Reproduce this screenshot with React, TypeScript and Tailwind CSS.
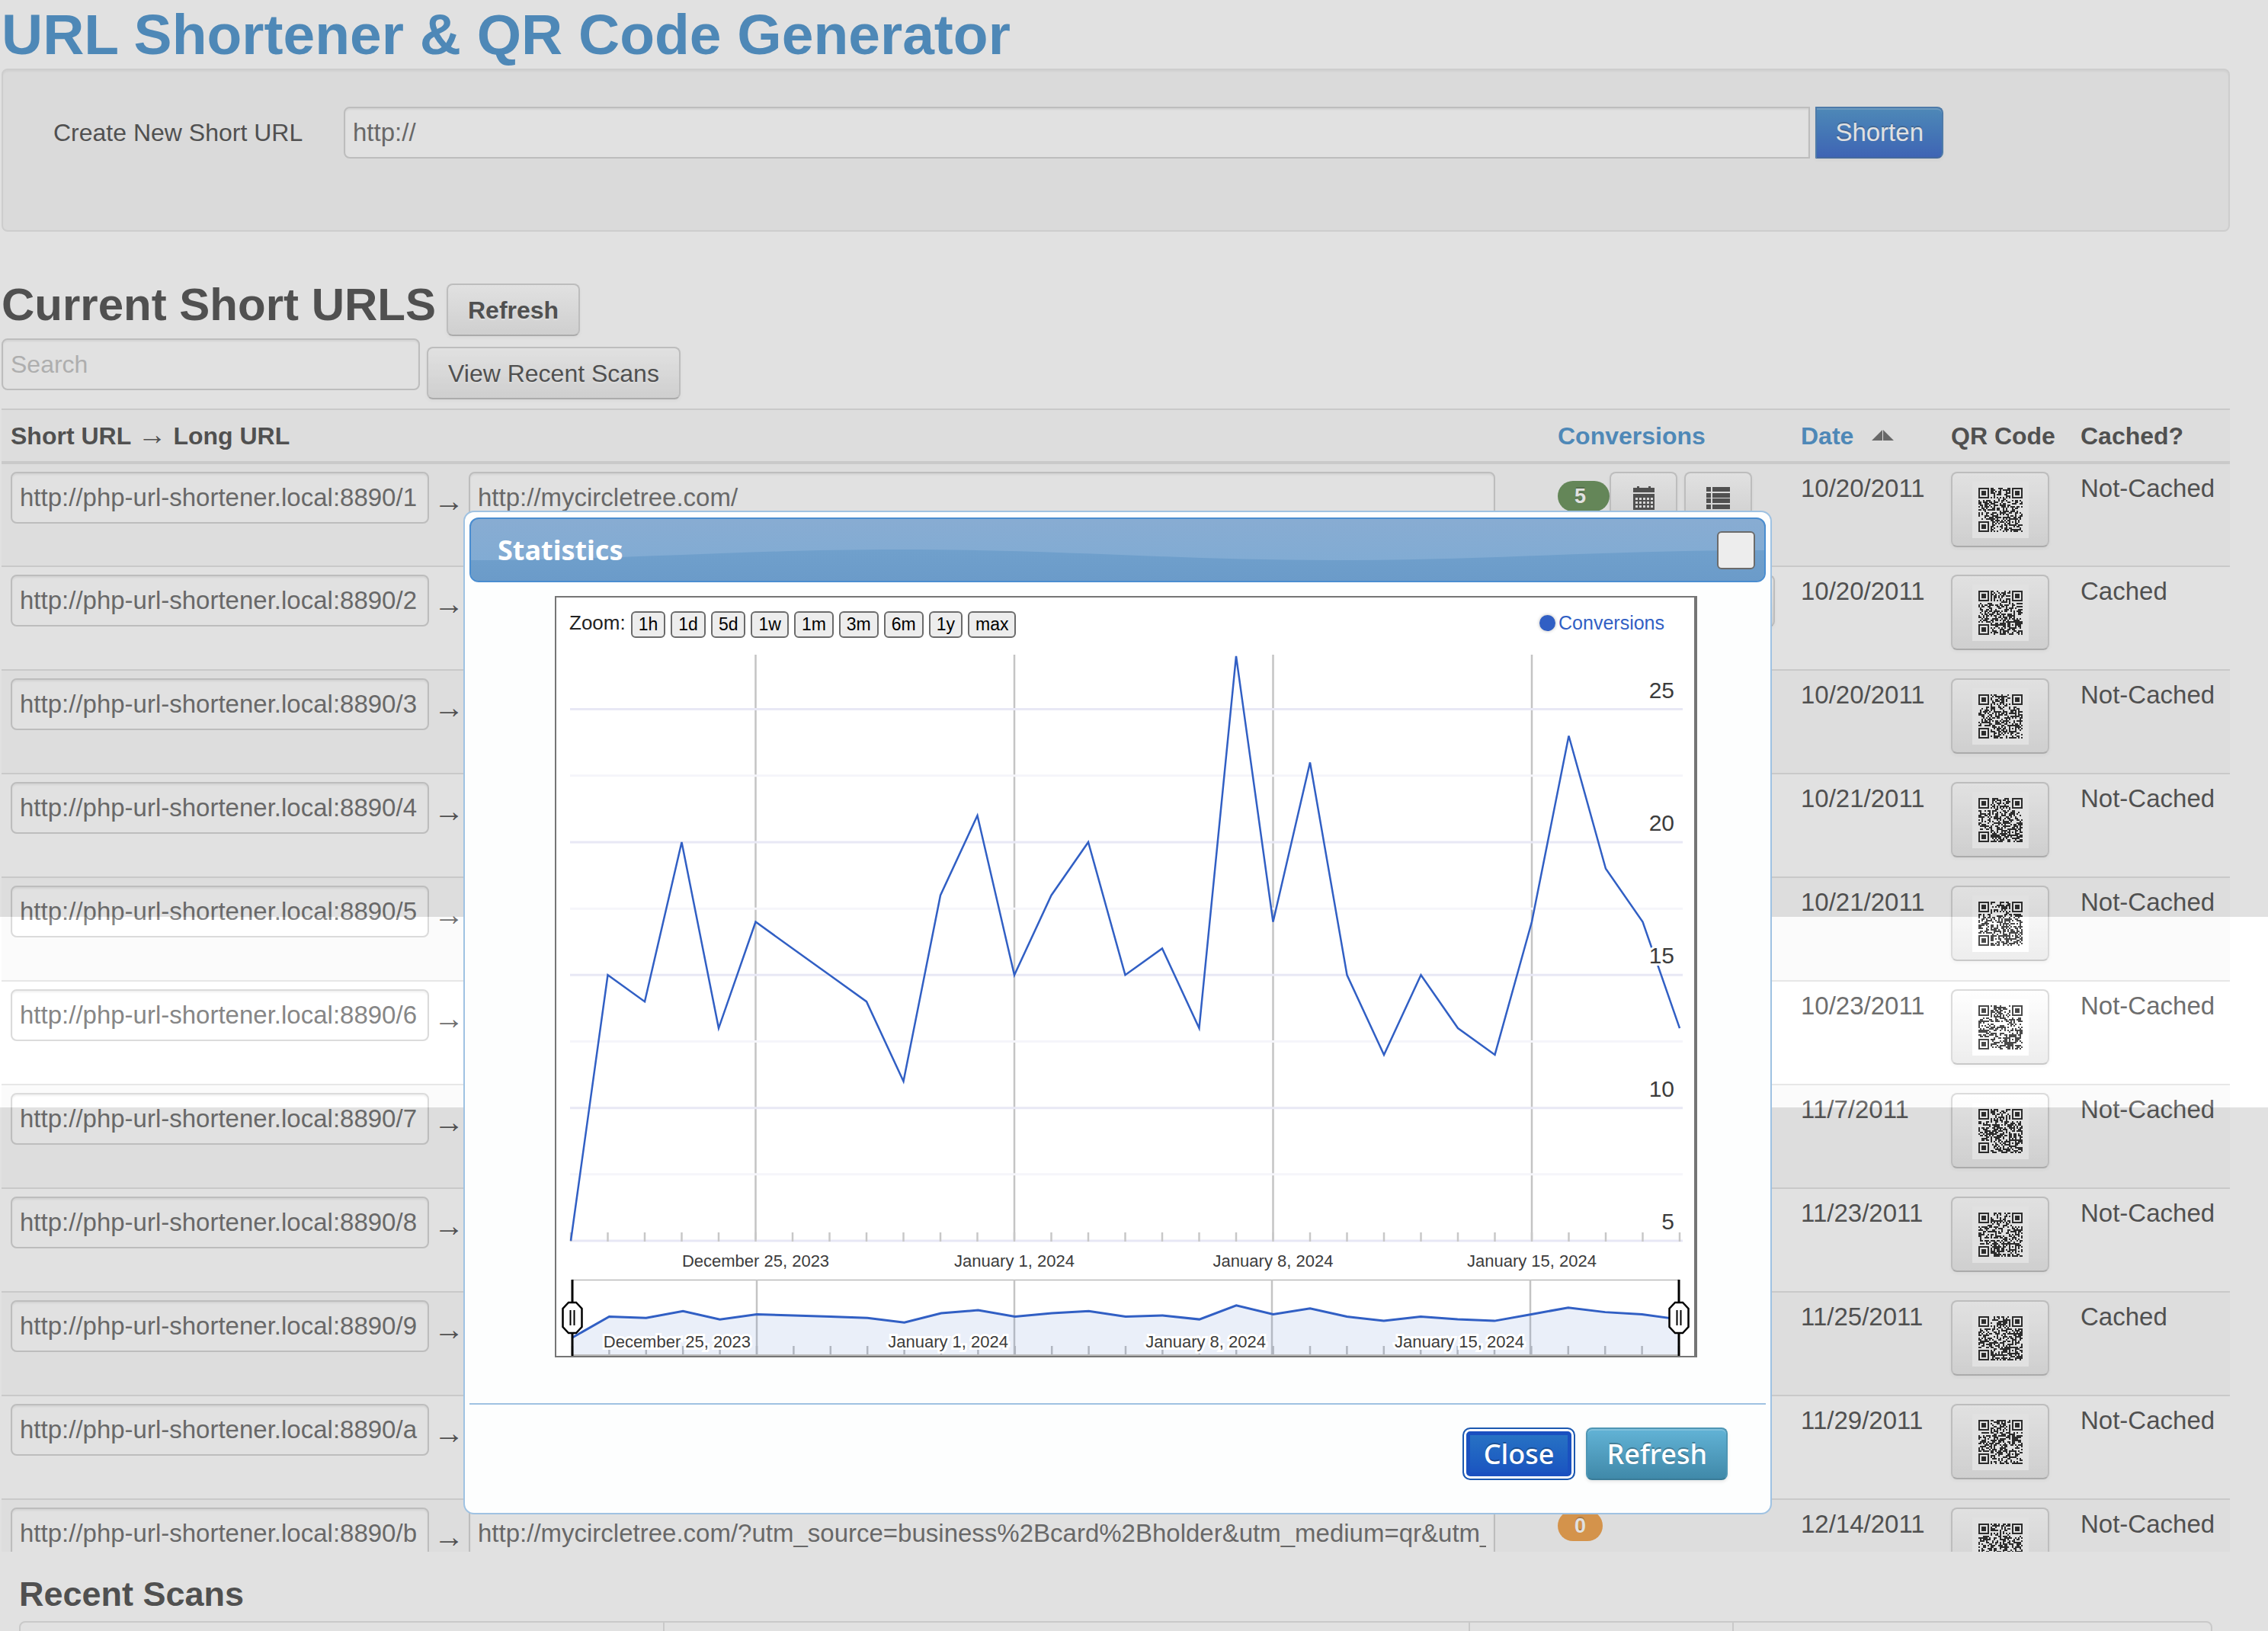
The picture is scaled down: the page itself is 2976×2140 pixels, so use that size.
import React from 'react';

type Row = { id: string; long: string; date: string; cached: boolean; hits: number };

const ROWS: Row[] = [
  { id: '1', long: 'http://mycircletree.com/', date: '10/20/2011', cached: false, hits: 5 },
  { id: '2', long: 'http://mycircletree.com/', date: '10/20/2011', cached: true, hits: 512 },
  { id: '3', long: 'http://mycircletree.com/', date: '10/20/2011', cached: false, hits: 0 },
  { id: '4', long: 'http://mycircletree.com/', date: '10/21/2011', cached: false, hits: 0 },
  { id: '5', long: 'http://mycircletree.com/', date: '10/21/2011', cached: false, hits: 0 },
  { id: '6', long: 'http://mycircletree.com/', date: '10/23/2011', cached: false, hits: 0 },
  { id: '7', long: 'http://mycircletree.com/', date: '11/7/2011', cached: false, hits: 0 },
  { id: '8', long: 'http://mycircletree.com/', date: '11/23/2011', cached: false, hits: 0 },
  { id: '9', long: 'http://mycircletree.com/', date: '11/25/2011', cached: true, hits: 0 },
  { id: 'a', long: 'http://mycircletree.com/', date: '11/29/2011', cached: false, hits: 0 },
  {
    id: 'b',
    long: 'http://mycircletree.com/?utm_source=business%2Bcard%2Bholder&utm_medium=qr&utm_campaign=card',
    date: '12/14/2011',
    cached: false,
    hits: 0,
  },
];

const CONVERSIONS = [
  5, 15, 14, 20, 13, 17, 16, 15, 14, 11, 18, 21, 15, 18, 20, 15, 16, 13, 27, 17, 23, 15, 12, 15, 13, 12, 17, 24, 19,
  17, 13,
];

const WEEKS = [
  { day: 5, rangeTick: 263, label: 'December 25, 2023' },
  { day: 12, rangeTick: 601, label: 'January 1, 2024' },
  { day: 19, rangeTick: 939, label: 'January 8, 2024' },
  { day: 26, rangeTick: 1278, label: 'January 15, 2024' },
];

const BTN =
  'rounded-[8px] border-2 border-[#ccc] border-b-[#b3b3b3] bg-gradient-to-b from-white to-[#e6e6e6] text-[32px] text-[#333] [text-shadow:0_2px_2px_rgba(255,255,255,0.75)] shadow-[0_2px_4px_rgba(0,0,0,0.05)]';
const INPUT =
  'h-[68px] rounded-[8px] border-2 border-[#ccc] bg-white px-[10px] text-[33px] text-[#555] shadow-[inset_0_2px_2px_rgba(0,0,0,0.075)] placeholder:text-[32px] placeholder:text-[#b8b8b8] outline-none';

/* 29 x 29 QR symbol with finder, timing and alignment patterns. */
function qrPath(seed: number): string {
  const n = 29;
  let s = seed * 7919 + 13;
  const next = () => {
    s = (s * 1103515245 + 12345) % 2147483648;
    return s / 2147483648;
  };
  const ring = (dx: number, dy: number) => Math.max(Math.abs(dx), Math.abs(dy));
  let d = '';
  for (let y = 0; y < n; y++) {
    for (let x = 0; x < n; x++) {
      let on = next() > 0.5;
      const corners = [
        [3, 3],
        [n - 4, 3],
        [3, n - 4],
      ];
      if (x === 6 || y === 6) on = (x + y) % 2 === 0;
      if (ring(x - 22, y - 22) <= 2) on = ring(x - 22, y - 22) !== 1;
      for (const [cx, cy] of corners) {
        const r = ring(x - cx, y - cy);
        if (r <= 4) on = r !== 4 && r !== 2;
      }
      if (on) d += `M${x + 4} ${y + 4}h1v1h-1z`;
    }
  }
  return d;
}

function QrCode({ seed }: { seed: number }) {
  return (
    <svg viewBox="0 0 37 37" className="h-[74px] w-[74px] bg-white" shapeRendering="crispEdges" aria-hidden="true">
      <path d={qrPath(seed)} fill="#000" />
    </svg>
  );
}

function CalendarIcon() {
  return (
    <svg viewBox="0 0 28 31" className="h-[31px] w-[28px]" fill="#333" aria-hidden="true">
      <path d="M0 2h5V0h3v2h12V0h3v2h5v6H0z" />
      <path
        fillRule="evenodd"
        d="M0 10h28v21H0z M3 15h3v3H3z M8 15h3v3H8z M13 15h3v3h-3z M18 15h3v3h-3z M23 15h3v3h-3z M3 20h3v3H3z M8 20h3v3H8z M13 20h3v3h-3z M18 20h3v3h-3z M23 20h3v3h-3z M3 25h3v3H3z M8 25h3v3H8z M13 25h3v3h-3z M18 25h3v3h-3z M23 25h3v3h-3z"
      />
    </svg>
  );
}

function ListIcon() {
  return (
    <svg viewBox="0 0 31 29" className="h-[29px] w-[31px]" fill="#333" aria-hidden="true">
      {[0, 8, 15, 23].map((y) => (
        <path key={y} d={`M0 ${y}h6v6H0z M8 ${y}h23v6H8z`} />
      ))}
    </svg>
  );
}

function HitBadge({ hits }: { hits: number }) {
  return (
    <span
      className={`rounded-full text-[27px] font-bold leading-[40px] text-white [text-shadow:0_-2px_0_rgba(0,0,0,0.25)] ${
        hits > 0 ? 'mt-3 bg-[#4f7f3f] pl-[22px] pr-[31px]' : 'mt-1 bg-[#ed912c] px-[22px]'
      }`}
    >
      {hits}
    </span>
  );
}

function UrlRow({ row, index }: { row: Row; index: number }) {
  return (
    <tr className="h-[136px] border-t-2 border-[#ddd] align-top odd:bg-[#f9f9f9]">
      <td className="px-3 pt-[10px]">
        <div className="flex items-center gap-[10px]">
          <input
            aria-label={`Short URL ${row.id}`}
            readOnly
            value={`http://php-url-shortener.local:8890/${row.id}`}
            className={`${INPUT} w-[549px]`}
          />
          <span className="flex w-8 justify-center pt-2 text-[40px] leading-[40px]">→</span>
          <input aria-label={`Long URL ${row.id}`} readOnly value={row.long} className={`${INPUT} mr-[58px] min-w-0 flex-1`} />
        </div>
      </td>
      <td className="px-3 pt-[10px]">
        <div className="flex items-start">
          <HitBadge hits={row.hits} />
          {row.hits > 0 && (
            <div className="flex gap-[9px]">
              <button aria-label="Statistics by date" className={`${BTN} flex h-[69px] w-[89px] items-center justify-center`}>
                <CalendarIcon />
              </button>
              <button aria-label="List conversions" className={`${BTN} flex h-[69px] w-[89px] items-center justify-center`}>
                <ListIcon />
              </button>
            </div>
          )}
        </div>
      </td>
      <td className="px-3 pt-[10px]">{row.date}</td>
      <td className="px-3 pt-[10px]">
        <button aria-label={`QR code ${row.id}`} className={`${BTN} flex h-[99px] w-[129px] items-center justify-center`}>
          <QrCode seed={index + 3} />
        </button>
      </td>
      <td className="px-3 pt-[10px]">{row.cached ? 'Cached' : 'Not-Cached'}</td>
    </tr>
  );
}

const CHART_W = 1493;
const CHART_H = 929;
const dayX = (i: number) => 19 + (i * 1455) / 30;
const valueY = (v: number) => 778 - (v - 5) * 34.87;
const rangeX = (i: number) => 21 + (i * 1452) / 30;
const rangeY = (v: number) => 905 - 25 * Math.log(v / 5);

function Handle({ x }: { x: number }) {
  return (
    <g stroke="#000">
      <path d={`M${x} 829V929`} strokeWidth="3" />
      <path d={`M${x - 5} 859h10l7.5 8v24l-7.5 8h-10l-7.5 -8v-24z`} fill="#fff" strokeWidth="2.5" />
      <path d={`M${x - 2.5} 869v20M${x + 2.5} 869v20`} strokeWidth="2" />
    </g>
  );
}

function TimelineChart() {
  const line = CONVERSIONS.map((v, i) => `${dayX(i)},${valueY(v)}`).join(' ');
  const range = CONVERSIONS.map((v, i) => `${rangeX(i)},${rangeY(v)}`).join(' ');
  const days = CONVERSIONS.map((_, i) => i);
  return (
    <svg
      viewBox={`0 0 ${CHART_W} ${CHART_H}`}
      className="block w-full font-['Liberation_Sans',Arial,sans-serif]"
      role="img"
      aria-label="Conversions over time"
    >
      {WEEKS.map((w) => (
        <path key={w.day} d={`M${dayX(w.day)} 9V778`} stroke="#c4c4c4" strokeWidth="2.5" />
      ))}
      {[7.5, 12.5, 17.5, 22.5].map((v) => (
        <path key={v} d={`M18 ${valueY(v)}H1478`} stroke="#f5f5fa" strokeWidth="3" />
      ))}
      {[5, 10, 15, 20, 25].map((v) => (
        <path key={v} d={`M18 ${valueY(v)}H1478`} stroke="#e8e8f5" strokeWidth="3" />
      ))}
      {days.map((i) => (
        <path key={i} d={`M${dayX(i)} 767v12`} stroke="#c8c8c8" strokeWidth="2.5" />
      ))}
      <polyline points={line} fill="none" stroke="#315fc4" strokeWidth="2.5" />
      {[5, 10, 15, 20, 25].map((v) => (
        <text
          key={v}
          x="1467"
          y={valueY(v) - 15}
          textAnchor="end"
          fontSize="30"
          fill="#3c3c3c"
          stroke="#fff"
          strokeWidth="6"
          paintOrder="stroke"
        >
          {v}
        </text>
      ))}
      {WEEKS.map((w) => (
        <text key={w.day} x={dayX(w.day)} y="812" textAnchor="middle" fontSize="22" fill="#3c3c3c">
          {w.label}
        </text>
      ))}

      <path d="M21 829.5H1473" stroke="#bbb" strokeWidth="1.5" />
      {WEEKS.map((w) => (
        <path key={w.day} d={`M${w.rangeTick} 829V928`} stroke="#c4c4c4" strokeWidth="2.5" />
      ))}
      {days.map((i) => (
        <path key={i} d={`M${rangeX(i)} 916v12`} stroke="#c0c0c0" strokeWidth="2.5" />
      ))}
      <polygon points={`21,928 ${range} 1473,928`} fill="#315fc4" fillOpacity="0.1" />
      <path d="M21 928H1473" stroke="#bbb" strokeWidth="2" />
      <polyline points={range} fill="none" stroke="#315fc4" strokeWidth="3" />
      {WEEKS.map((w) => (
        <text
          key={w.day}
          x={w.rangeTick - 8}
          y="918"
          textAnchor="end"
          fontSize="22"
          fill="#3c3c3c"
          stroke="#fff"
          strokeWidth="6"
          paintOrder="stroke"
        >
          {w.label}
        </text>
      ))}
      <Handle x={21} />
      <Handle x={1473} />
    </svg>
  );
}

function StatisticsDialog() {
  return (
    <div
      role="dialog"
      aria-label="Statistics"
      className="w-[1717px] rounded-[14px] border-2 border-[#9fc2e2] bg-[#fdfefe] p-[6px] pt-[7px] font-['Noto_Sans','Open_Sans',sans-serif]"
    >
      <div className="relative flex h-[85px] items-center justify-between overflow-hidden rounded-[12px] border-2 border-[#4a8dd0] bg-gradient-to-b from-[#88acd2] to-[#7eabd4] pl-[35px] pr-3">
        <svg
          viewBox="0 0 1700 81"
          preserveAspectRatio="none"
          className="absolute inset-0 h-full w-full"
          aria-hidden="true"
        >
          <defs>
            <linearGradient id="wave" x1="0" y1="0" x2="0" y2="1">
              <stop offset="0" stopColor="#70a0cc" />
              <stop offset="1" stopColor="#6b9bc9" />
            </linearGradient>
          </defs>
          <path
            d="M0 54C200 54 350 40 565 40S930 54 1130 54S1500 41 1700 41V81H0z"
            fill="url(#wave)"
          />
        </svg>
        <h2 className="relative text-[36px] font-bold leading-none text-white">Statistics</h2>
        <button
          aria-label="Close dialog"
          className="relative h-[50px] w-[50px] rounded-[6px] border-2 border-[#6b6b6b] bg-[#ededed]"
        />
      </div>

      <div className="mb-[60px] ml-[112px] mr-[90px] mt-[18px] border-2 border-r-4 border-[#757575] bg-white font-['Liberation_Sans',Arial,sans-serif]">
        <div className="flex h-[66px] items-start justify-between pl-[17px] pr-[39px] pt-[18px]">
          <div className="flex items-start gap-[7px]">
            <span className="text-[26px] leading-[30px] text-[#222]">Zoom:</span>
            {['1h', '1d', '5d', '1w', '1m', '3m', '6m', '1y', 'max'].map((z) => (
              <button
                key={z}
                className="h-[35px] rounded-[6px] border-2 border-[#6b6b6b] bg-[#ededed] px-2 text-[23px] leading-[31px] text-black"
              >
                {z}
              </button>
            ))}
          </div>
          <div className="flex items-center gap-1 text-[25px] leading-[30px] text-[#315fc4]">
            <span className="h-[21px] w-[21px] rounded-full bg-[#315fc4] shadow-[0_0_4px_rgba(0,0,0,0.3)]" />
            Conversions
          </div>
        </div>
        <TimelineChart />
      </div>

      <div className="flex h-[138px] items-start justify-end gap-[14px] border-t-2 border-[#9fc2e2] pr-[50px] pt-[30px] text-[36px] font-medium leading-none text-white">
        <button className="h-[69px] rounded-[10px] border-2 border-[#1c58b0] bg-gradient-to-b from-[#2a76c4] to-[#1a50c0] px-[26px] [text-shadow:0_-2px_0_rgba(0,0,0,0.25)] shadow-[inset_0_0_0_3px_#fff,inset_0_0_0_8px_#1a50c0]">
          Close
        </button>
        <button className="h-[69px] rounded-[8px] border-2 border-[#4f96b4] border-b-[#3a7c98] bg-gradient-to-b from-[#62b3d6] to-[#4089a9] px-[25px] [text-shadow:0_-2px_0_rgba(0,0,0,0.25)] shadow-[inset_0_2px_0_rgba(255,255,255,0.2),0_2px_4px_rgba(0,0,0,0.1)]">
          Refresh
        </button>
      </div>
    </div>
  );
}

export default function App() {
  return (
    <div className="relative flex h-screen flex-col overflow-hidden bg-white font-['Liberation_Sans',Arial,sans-serif] text-[33px] leading-[44px] text-[#333]">
      <main className="ml-[2px] mr-[50px] min-h-0 flex-1 overflow-hidden">
        <h1 className="text-[75px] font-bold leading-[90px] text-[#3182c4]">URL Shortener &amp; QR Code Generator</h1>

        <form
          onSubmit={(e) => e.preventDefault()}
          className="flex h-[214px] items-start rounded-[8px] border-2 border-[#e3e3e3] bg-[#f5f5f5] pl-[66px] pr-[374px] pt-12 shadow-[inset_0_2px_2px_rgba(0,0,0,0.05)]"
        >
          <label htmlFor="url" className="w-[381px] text-[32px] leading-[68px]">
            Create New Short URL
          </label>
          <input id="url" defaultValue="http://" className={`${INPUT} min-w-0 flex-1 rounded-r-none`} />
          <button className="ml-[7px] h-[68px] rounded-r-[8px] border-2 border-[#2f6fb0] border-b-[#2456a0] bg-gradient-to-b from-[#3182c4] to-[#1c4fc0] px-6 text-white [text-shadow:0_-2px_0_rgba(0,0,0,0.25)] shadow-[inset_0_2px_0_rgba(255,255,255,0.2),0_2px_4px_rgba(0,0,0,0.05)]">
            Shorten
          </button>
        </form>

        <div className="mt-[66px] flex h-[74px] items-start gap-[14px]">
          <h2 className="text-[60px] font-bold leading-[60px]">Current Short URLS</h2>
          <button className={`${BTN} mt-[2px] h-[69px] px-[26px] font-bold`}>Refresh</button>
        </div>

        <div className="mb-3 flex h-20 items-end gap-[9px]">
          <input aria-label="Search" placeholder="Search" className={`${INPUT} w-[549px] self-start`} />
          <button className={`${BTN} h-[69px] px-[26px]`}>View Recent Scans</button>
        </div>

        <table className="w-full table-fixed border-collapse">
          <colgroup>
            <col />
            <col className="w-[319px]" />
            <col className="w-[197px]" />
            <col className="w-[170px]" />
            <col className="w-[208px]" />
          </colgroup>
          <thead className="text-[32px]">
            <tr className="h-[70px] border-b-4 border-t-2 border-[#ddd] bg-[#f9f9f9] text-left">
              <th className="px-3">
                Short URL <span className="text-[38px] font-normal leading-none">→</span> Long URL
              </th>
              <th className="px-3">
                <a href="#conversions" className="text-[#3182c4]">
                  Conversions
                </a>
              </th>
              <th className="whitespace-nowrap px-3">
                <a href="#date" className="text-[#3182c4]">
                  Date
                </a>
                <svg viewBox="0 0 29 14" className="ml-6 inline-block h-[14px] w-[29px] align-[5px]" aria-hidden="true">
                  <path d="M0 14L14 0V14zM15 0L29 14H15z" fill="#555" />
                </svg>
              </th>
              <th className="whitespace-nowrap px-3">QR Code</th>
              <th className="px-3">Cached?</th>
            </tr>
          </thead>
          <tbody>
            {ROWS.map((row, i) => (
              <UrlRow key={row.id} row={row} index={i} />
            ))}
          </tbody>
        </table>
      </main>

      <section className="h-[104px] shrink-0 overflow-hidden pl-[25px] pr-[73px] pt-[31px]">
        <h3 className="text-[45px] font-bold leading-[50px]">Recent Scans</h3>
        <div className="mt-[10px] grid h-20 grid-cols-[846fr_1059fr_346fr_627fr] divide-x-2 divide-[#ddd] rounded-[8px] border-2 border-[#ddd]">
          <div />
          <div />
          <div />
          <div />
        </div>
      </section>

      <div className="absolute inset-0 flex flex-col">
        <div className="h-[1203px] bg-[rgb(152,152,152)]/29" />
        <div className="h-[250px] bg-white/29" />
        <div className="flex-1 bg-[rgb(152,152,152)]/29" />
      </div>

      <div className="absolute inset-0 flex items-start justify-center pr-[43px] pt-[670px]">
        <StatisticsDialog />
      </div>
    </div>
  );
}
